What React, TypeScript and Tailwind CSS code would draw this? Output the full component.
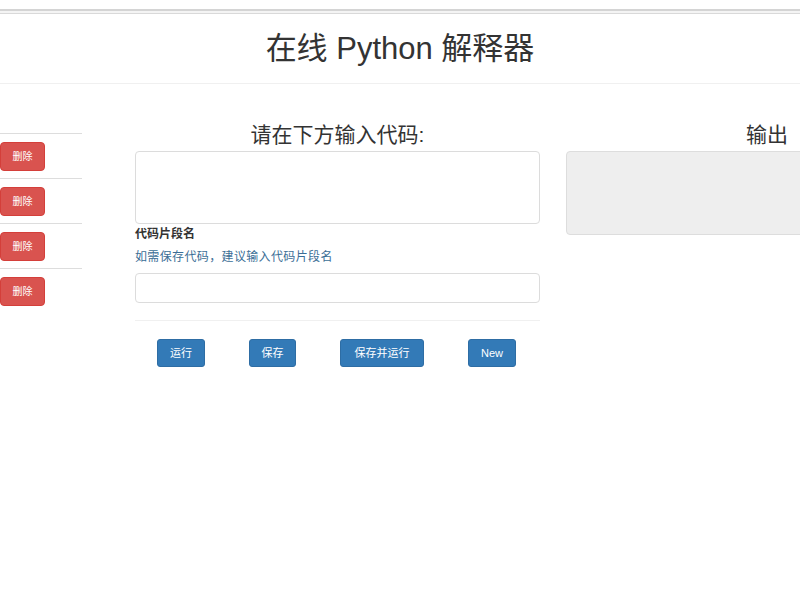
import React from "react";

const font = { fontFamily: '"Liberation Sans", "Noto Sans CJK SC", sans-serif' };

function DelRow() {
  return (
    <div className="h-[45px] border-t border-[#dddddd] pt-[8px]">
      <button className="w-[45px] h-[29px] rounded-[4px] bg-[#d9534f] border border-[#d43f3a] text-white text-[10px] leading-none">
        删除
      </button>
    </div>
  );
}

function Btn({ label, w }: { label: string; w: string }) {
  return (
    <button
      className={`${w} h-[28px] rounded-[3px] bg-[#337ab7] border border-[#2e6da4] text-white text-[11px] leading-none`}
    >
      {label}
    </button>
  );
}

export default function App() {
  return (
    <div className="w-[800px] h-[600px] overflow-hidden bg-white text-[#333333]" style={font}>
      <div className="h-[9px]" />
      <div className="h-[2px] bg-[#d4d4d4]" />
      <div className="h-[2px] bg-[#f4f4f4]" />
      <div className="h-[1px] bg-[#d9d9d9]" />
      <div className="h-[70px] border-b border-[#f0f0f0] flex items-center justify-center">
        <h1 className="text-[31px] leading-none text-[#333333]">在线 Python 解释器</h1>
      </div>
      <div className="flex items-start pt-[49px]">
        <div className="w-[82px] shrink-0">
          <DelRow />
          <DelRow />
          <DelRow />
          <DelRow />
        </div>
        <div className="w-[405px] shrink-0 ml-[53px] -mt-[13px]">
          <div className="h-[30px] flex items-center justify-center text-[21px]">请在下方输入代码:</div>
          <div className="h-[73px] mt-[1px] border border-[#dcdcdc] rounded-[4px] bg-white" />
          <div className="text-[12px] font-bold mt-[3px] leading-[15px]">代码片段名</div>
          <div className="text-[12px] text-[#3b6e96] mt-[8px] leading-[15px] tracking-[0.03em]">如需保存代码，建议输入代码片段名</div>
          <div className="h-[30px] mt-[8px] border border-[#dcdcdc] rounded-[4px] bg-white" />
          <div className="h-[1px] bg-[#f0f0f0] mt-[17px]" />
          <div className="flex gap-[44px] pl-[22px] mt-[18px]">
            <Btn label="运行" w="w-[48px]" />
            <Btn label="保存" w="w-[47px]" />
            <Btn label="保存并运行" w="w-[84px]" />
            <Btn label="New" w="w-[48px]" />
          </div>
        </div>
        <div className="w-[402px] shrink-0 ml-[26px] -mt-[13px]">
          <div className="h-[30px] flex items-center justify-center text-[21px]">输出</div>
          <div className="h-[84px] mt-[1px] border border-[#dddddd] rounded-[4px] bg-[#eeeeee]" />
        </div>
      </div>
    </div>
  );
}
